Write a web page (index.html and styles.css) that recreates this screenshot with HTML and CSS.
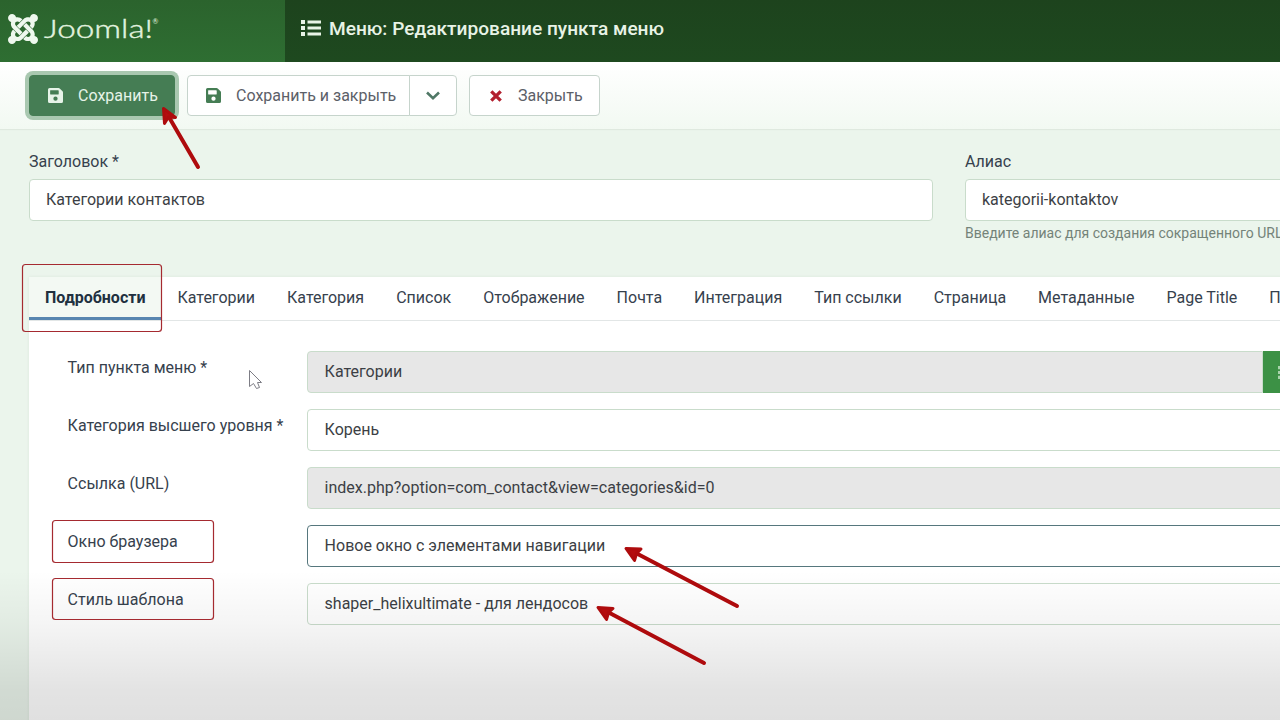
FILE: index.html
```html
<!DOCTYPE html>
<html lang="ru">
<head>
    <meta charset="UTF-8">
    <meta name="viewport" content="width=device-width, initial-scale=1.0">
    <title>Меню: Редактирование пункта меню</title>
    <link rel="stylesheet" href="styles.css">
</head>
<body>
    <header class="header">
        <div class="brand">
            <svg class="brand-mark" viewBox="0 32 448 448" width="30" height="30">
                <path fill="#eff8ee" d="M.6 92.1C.6 58.8 27.4 32 60.4 32c30 0 54.5 21.9 59.2 50.2 32.6-7.6 67.1.6 96.500 30l-44.300 44.300c-20.500-20.500-42.600-16.300-55.400-3.500-14.300 14.300-14.300 37.900 0 52.200l99.500 99.500-44 44.300c-87.700-87.200-49.700-49.700-99.800-99.700-26.800-26.500-35-64.800-24.800-98.900C20.400 144.600.6 120.700.6 92.100zm129.500 116.400l44.300 44.300c10-10 89.700-89.700 99.700-99.800 14.300-14.300 37.600-14.300 51.900 0 12.800 12.800 17 35-3.500 55.400l44 44.300c31.200-31.200 38.500-67.600 28.900-101.200 29.200-4.100 51.900-29.200 51.900-59.500 0-33.200-26.800-60.100-59.800-60.100-30.300 0-55.400 22.500-59.500 51.600-33.800-9.900-71.700-1.500-98.300 25.100-18.300 19.100-71.100 71.500-99.600 99.900zm266.300 152.200c8.200-32.700-.9-68.500-26.300-93.900-11.800-12.200 5 4.700-99.500-99.700l-44.300 44.300 99.700 99.700c14.300 14.300 14.300 37.600 0 51.900-12.800 12.800-35 17-55.400-3.500l-44 44.300c27.600 30.200 68 38.800 102.700 28 5.500 27.400 29.700 48.100 58.900 48.100 33 0 59.800-26.800 59.800-60.100 0-30.200-22.500-55-51.600-59.100zm-84.300-53.100l-44-44.300c-87 86.400-50.400 50.400-99.700 99.800-14.300 14.300-37.600 14.300-51.900 0-13.100-13.400-16.900-35.300 3.200-55.400l-44-44.300c-30.200 30.200-38 65.200-29.500 98.300-26.700 6-46.200 29.900-46.200 58.200C0 453.200 26.800 480 59.800 480c28.600 0 52.500-19.800 58.600-46.700 32.700 8.200 68.500-.6 94.200-26 32.100-32 12.200-12.400 99.500-99.700z"/>
            </svg>
            <svg class="brand-name" viewBox="0 0 118 34" width="118" height="34">
                <text x="1" y="26" textLength="109" lengthAdjust="spacingAndGlyphs">Joomla!</text>
                <text class="reg" x="109.500" y="12">®</text>
            </svg>
        </div>
        <div class="page-title">
            <svg viewBox="0 0 20 16" width="20" height="16" fill="#e8f3e6">
                <path d="M0 0h4v4H0zM0 6h4v4H0zM0 12h4v4H0zM6.500 .5h13.500v3h-13.500zM6.500 6.500h13.500v3h-13.500zM6.500 12.500h13.500v3h-13.500z"/>
            </svg>
            <h1>Меню: Редактирование пункта меню</h1>
        </div>
    </header>

    <div class="toolbar">
        <button class="btn btn-save">
            <svg class="icon" viewBox="0 0 448 448" width="15" height="15"><path fill="currentColor" d="M434 98L350 14A48 48 0 0 0 316 0H48A48 48 0 0 0 0 48V400A48 48 0 0 0 48 448H400A48 48 0 0 0 448 400V132A48 48 0 0 0 434 98ZM224 384A64 64 0 1 1 224 256A64 64 0 0 1 224 384ZM320 180A12 12 0 0 1 308 192H76A12 12 0 0 1 64 180V76A12 12 0 0 1 76 64H305L320 80Z"/></svg>
            <span>Сохранить</span>
        </button>
        <div class="btn-group">
            <button class="btn btn-main">
                <svg class="icon green" viewBox="0 0 448 448" width="15" height="15"><path fill="currentColor" d="M434 98L350 14A48 48 0 0 0 316 0H48A48 48 0 0 0 0 48V400A48 48 0 0 0 48 448H400A48 48 0 0 0 448 400V132A48 48 0 0 0 434 98ZM224 384A64 64 0 1 1 224 256A64 64 0 0 1 224 384ZM320 180A12 12 0 0 1 308 192H76A12 12 0 0 1 64 180V76A12 12 0 0 1 76 64H305L320 80Z"/></svg>
                <span>Сохранить и закрыть</span>
            </button>
            <button class="btn btn-toggle">
                <svg viewBox="0 0 14 9" width="14" height="9" fill="none" stroke="#507866" stroke-width="2.600"><path d="M1 1.500l6 5.700 6-5.700"/></svg>
            </button>
        </div>
        <button class="btn btn-close">
            <svg class="icon" viewBox="0 0 12 12" width="12" height="12" stroke="#b3202f" stroke-width="3.300"><path d="M1.300 1.300l9.400 9.400M10.700 1.300l-9.400 9.400"/></svg>
            <span>Закрыть</span>
        </button>
    </div>

    <main class="content">
        <div class="title-row">
            <div class="field-title">
                <label>Заголовок *</label>
                <div class="control">Категории контактов</div>
            </div>
            <div class="field-alias">
                <label>Алиас</label>
                <div class="control">kategorii-kontaktov</div>
                <small>Введите алиас для создания сокращенного URL</small>
            </div>
        </div>

        <section class="card">
            <nav class="tabs">
                <a class="tab active">Подробности</a>
                <a class="tab">Категории</a>
                <a class="tab">Категория</a>
                <a class="tab">Список</a>
                <a class="tab">Отображение</a>
                <a class="tab">Почта</a>
                <a class="tab">Интеграция</a>
                <a class="tab">Тип ссылки</a>
                <a class="tab">Страница</a>
                <a class="tab">Метаданные</a>
                <a class="tab">Page Title</a>
                <a class="tab">П</a>
            </nav>
            <div class="form">
                <div class="row">
                    <label>Тип пункта меню *</label>
                    <div class="control readonly joined">Категории</div>
                    <div class="select-btn">
                        <svg viewBox="0 0 20 16" width="16" height="13" fill="#a9d3ac"><path d="M0 0h4v4H0zM0 6h4v4H0zM0 12h4v4H0zM6.500 .7h13.500v2.600H6.500zM6.500 6.700h13.500v2.600H6.500zM6.500 12.700h13.500v2.600H6.500z"/></svg>
                    </div>
                </div>
                <div class="row">
                    <label>Категория высшего уровня *</label>
                    <div class="control">Корень</div>
                </div>
                <div class="row">
                    <label>Ссылка (URL)</label>
                    <div class="control readonly">index.php?option=com_contact&amp;view=categories&amp;id=0</div>
                </div>
                <div class="row">
                    <label>Окно браузера</label>
                    <div class="control focused">Новое окно с элементами навигации</div>
                </div>
                <div class="row">
                    <label>Стиль шаблона</label>
                    <div class="control">shaper_helixultimate - для лендосов</div>
                </div>
            </div>
        </section>
    </main>

    <div class="shade"></div>

    <!-- Annotations: frames, arrows, mouse pointer -->
    <svg class="marks" viewBox="0 0 1280 720" width="1280" height="720">
        <g fill="none" stroke="#a52a30" stroke-width="1.200">
            <rect x="22.500" y="264.500" width="139" height="67" rx="3"/>
            <rect x="52.500" y="520.500" width="161" height="42" rx="3"/>
            <rect x="52.500" y="578.500" width="161" height="41" rx="3"/>
        </g>
        <g stroke="#ae0b0d" stroke-width="4" stroke-linecap="round" stroke-linejoin="round" fill="#b50d0f">
            <path d="M198 167L166 112"/>
            <path stroke-width="3" d="M163.500 108.500L164.500 123.500L168.500 117L175.500 117.500Z"/>
            <path d="M737 606L632 551"/>
            <path stroke-width="3" d="M626 548.500L641 549L636.500 553.500L634.500 560.500Z"/>
            <path d="M704 663L604 610"/>
            <path stroke-width="3" d="M598 607.500L613 608.500L608.500 612.500L606.500 619.500Z"/>
        </g>
        <path fill="#fff" stroke="#7d7d85" stroke-width="1" d="M249.500 370.500V386.500L253.500 383.500L256.500 388.500L259.500 387.500L257.500 382.500H261.500Z"/>
    </svg>
</body>
</html>
```

FILE: styles.css
```css
* {
    box-sizing: border-box;
}

body {
    font-family: Roboto, "Liberation Sans", sans-serif;
    font-size: 16px;
    color: #36414d;
    background-color: #ebf5ec;
    margin: 0;
    width: 1280px;
    height: 720px;
    overflow: hidden;
    position: relative;
    display: flex;
    flex-direction: column;
}

.header {
    display: flex;
    height: 62px;
    flex: none;
    background: linear-gradient(#1d431d, #1e491f);
}

.brand {
    display: flex;
    align-items: center;
    width: 285px;
    padding: 0 0 4px 8px;
    background: linear-gradient(#2b632d, #2e6e32);
}

.brand-name {
    margin-left: 5px;
    fill: #e2f2df;
    stroke: #e2f2df;
    stroke-width: 0.4px;
    font-family: Lato, sans-serif;
    font-weight: 300;
    font-size: 25px;
}

.brand-name .reg {
    stroke: none;
    font-size: 7px;
    font-weight: 400;
}

.page-title {
    display: flex;
    align-items: center;
    gap: 8px;
    padding: 0 0 5px 16px;
    color: #e8f3e6;
}

.page-title svg {
    margin-bottom: 1px;
}

.page-title h1 {
    margin: 0;
    font-size: 19.1px;
    font-weight: 500;
}

.toolbar {
    display: flex;
    align-items: flex-start;
    height: 67px;
    flex: none;
    padding: 13px 0 0 29px;
    background: linear-gradient(#ffffff, #f2f9f2);
    box-shadow: 0 1px 1px #dfe9df;
}

.btn {
    display: flex;
    align-items: center;
    height: 41px;
    padding: 0;
    font-family: inherit;
    font-size: 16px;
    color: #5c6068;
    background: #fff;
    border: 1px solid #c6d4cc;
    border-radius: 4px;
    white-space: nowrap;
}

.green {
    color: #457d54;
}

.btn-save {
    width: 146px;
    padding-left: 18px;
    gap: 15px;
    color: #e6f3e8;
    background: #457d54;
    border-color: #457d54;
    box-shadow: 0 0 0 4px #a9c8b0;
}

.btn-group {
    display: flex;
    margin-left: 12px;
}

.btn-main {
    width: 223px;
    padding-left: 18px;
    gap: 15px;
    border-radius: 4px 0 0 4px;
}

.btn-toggle {
    justify-content: center;
    width: 48px;
    margin-left: -1px;
    border-radius: 0 4px 4px 0;
}

.btn-close {
    width: 131px;
    margin-left: 12px;
    padding-left: 20px;
    gap: 16px;
}

.content {
    flex: 1;
    padding: 22px 0 0 29px;
}

.title-row {
    display: flex;
    gap: 32px;
    height: 126px;
}

.title-row label {
    display: block;
    line-height: 22px;
    margin-bottom: 6px;
}

.control {
    height: 42px;
    padding: 0 16px;
    line-height: 40px;
    color: #3c3f45;
    background: #fff;
    border: 1px solid #c9dccb;
    border-radius: 4px;
    white-space: nowrap;
}

.field-title {
    width: 904px;
    flex: none;
}

.field-alias {
    width: 400px;
    flex: none;
}

.field-alias small {
    display: block;
    margin-top: 4px;
    font-size: 14px;
    line-height: 17px;
    color: #748379;
    white-space: nowrap;
}

.card {
    width: 1300px;
    height: 460px;
    background: #fff;
    box-shadow: 0 0 3px #dce6dd;
}

.tabs {
    display: flex;
    height: 44px;
    border-bottom: 1px solid #e2e6e6;
}

.tab {
    flex: none;
    padding: 0 16px;
    line-height: 42px;
    white-space: nowrap;
}

.tab.active {
    height: 43px;
    font-weight: 700;
    color: #20303f;
    background: #f3f9f3;
    border-bottom: 3px solid #5886b0;
}

.form {
    display: flex;
    flex-direction: column;
    gap: 16px;
    padding: 30px 0 0 38px;
}

.row {
    display: flex;
    height: 42px;
}

.row label {
    width: 240px;
    flex: none;
    padding-left: 0.6px;
    line-height: 34px;
}

.row .control {
    width: 1010px;
    padding-left: 16.6px;
}

.row .control.joined {
    width: 956px;
    border-radius: 4px 0 0 4px;
}

.control.readonly {
    background: #e7e7e7;
}

.control.focused {
    border-color: #56777d;
}

.select-btn {
    display: flex;
    align-items: center;
    width: 54px;
    padding-left: 15px;
    background: #3c9145;
}

/* darkening towards the bottom edge */
.shade {
    position: absolute;
    left: 0;
    right: 0;
    bottom: 0;
    height: 150px;
    background: linear-gradient(rgba(0, 0, 0, 0), rgba(0, 0, 0, 0.04) 35%, rgba(0, 0, 0, 0.11) 80%, rgba(0, 0, 0, 0.12));
}

.marks {
    position: absolute;
    left: 0;
    top: 0;
}
```
